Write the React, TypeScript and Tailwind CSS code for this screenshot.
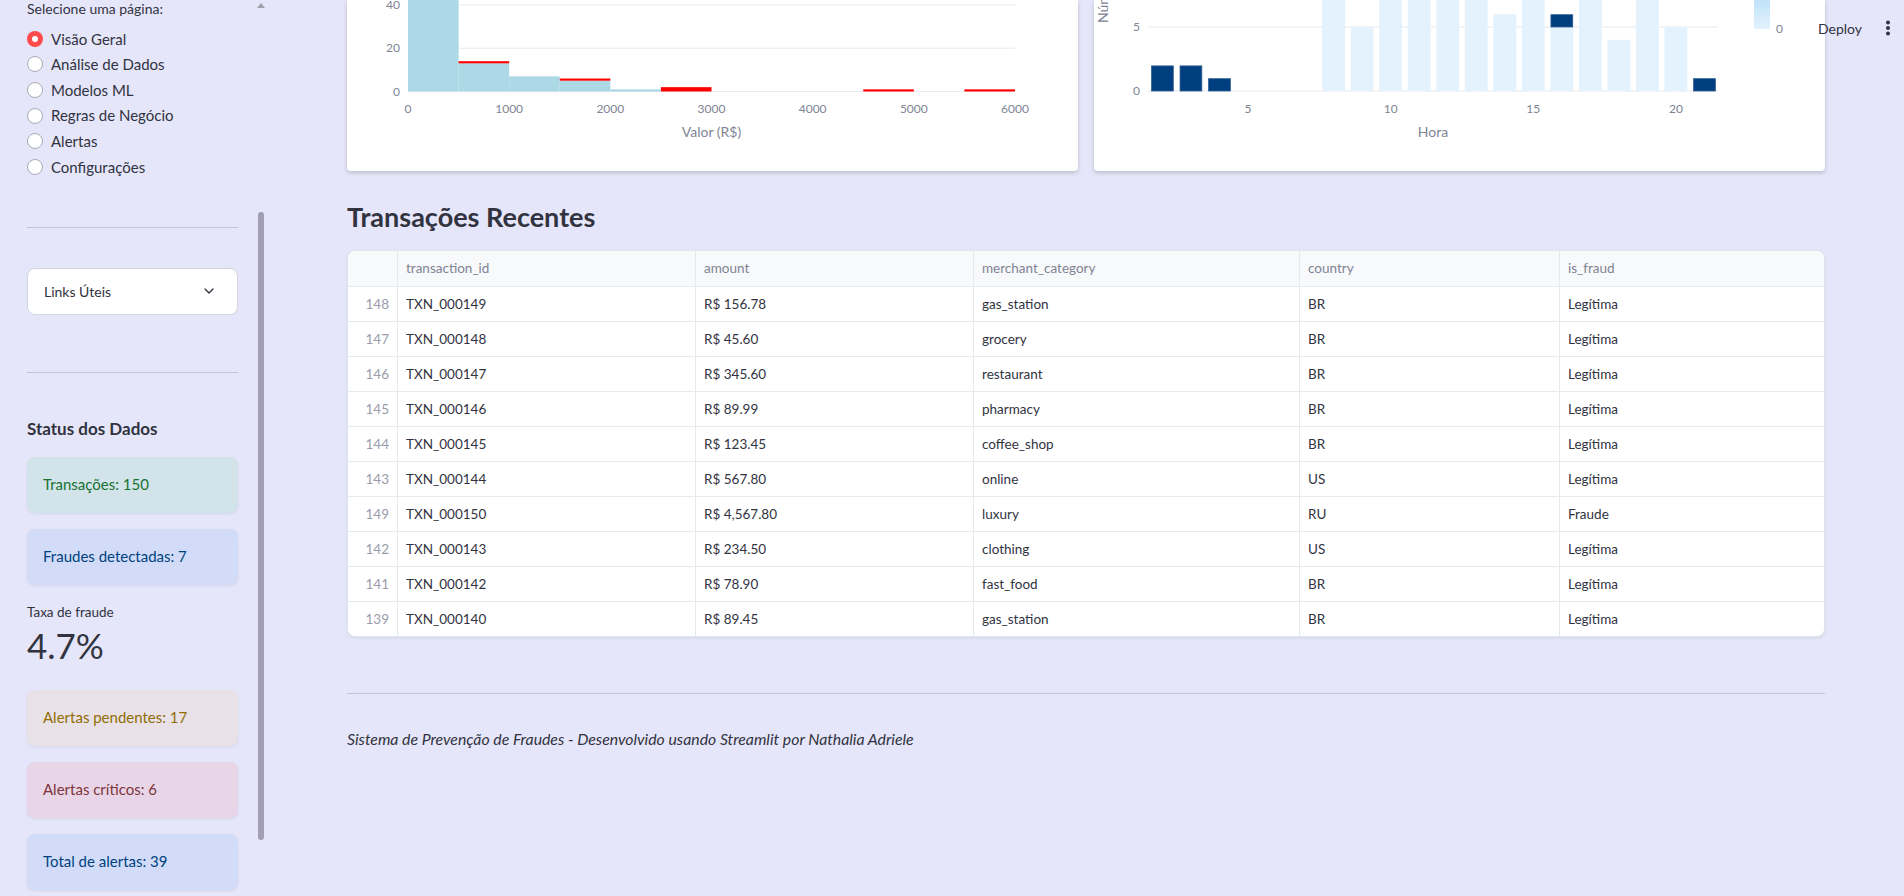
import React from "react";
import { ChevronDown } from "lucide-react";

const SVGF = "Lato, 'Liberation Sans', sans-serif";

function HistChart() {
  const W = 731, H = 171;
  const x0 = 61, x1 = 668;
  const xv = (v: number) => x0 + (v / 6000) * (x1 - x0);
  const y0 = 91.5, u = 2.165;
  const blue = [60, 13, 7, 5, 1, 0, 0, 0, 0, 0, 0, 0];
  const red = [1, 1, 0, 1, 0, 2, 0, 0, 0, 1, 0, 1];
  const bw = xv(500) - xv(0);
  return (
    <svg width={W} height={H} viewBox={`0 0 ${W} ${H}`} className="block">
      {[0, 20, 40].map((t) => (
        <line key={t} x1={x0} x2={x1} y1={y0 - t * u} y2={y0 - t * u} stroke="#e6eaf1" strokeWidth={1} />
      ))}
      {blue.map((v, i) =>
        v > 0 ? <rect key={"b" + i} x={xv(500 * i)} y={y0 - v * u} width={bw} height={v * u} fill="#add8e6" /> : null
      )}
      {red.map((r, i) =>
        r > 0 ? (
          <rect key={"r" + i} x={xv(500 * i)} y={y0 - (blue[i] + r) * u} width={bw} height={r * u} fill="#ff0000" />
        ) : null
      )}
      {[0, 20, 40].map((t) => (
        <text key={"yl" + t} x={53} y={y0 - t * u + 4} textAnchor="end" fontSize={12} fill="#808495" fontFamily={SVGF}>
          {t}
        </text>
      ))}
      {[0, 1000, 2000, 3000, 4000, 5000, 6000].map((v) => (
        <text key={"xl" + v} x={xv(v)} y={113} textAnchor="middle" fontSize={12} fill="#808495" fontFamily={SVGF}>
          {v}
        </text>
      ))}
      <text x={(x0 + x1) / 2} y={137} textAnchor="middle" fontSize={14} fill="#808495" fontFamily={SVGF}>
        Valor (R$)
      </text>
    </svg>
  );
}

function HourChart() {
  const W = 731, H = 171;
  const x0 = 54, x1 = 624;
  const hx = (h: number) => 154 + (h - 5) * 28.53;
  const y0 = 91, u = 12.8;
  const bw = 22.8;
  const legit: Record<number, number> = { 8: 10, 9: 5, 10: 9, 11: 10, 12: 11, 13: 9, 14: 6, 15: 8, 16: 5, 17: 9, 18: 4, 19: 8, 20: 5 };
  const fraud: Record<number, number> = { 2: 2, 3: 2, 4: 1, 16: 1, 21: 1 };
  const hours = Array.from({ length: 20 }, (_, i) => i + 2);
  return (
    <svg width={W} height={H} viewBox={`0 0 ${W} ${H}`} className="block">
      <defs>
        <linearGradient id="cb" x1="0" y1="1" x2="0" y2="0">
          <stop offset="0" stopColor="#e3f2fd" />
          <stop offset="1" stopColor="#a8d8f8" />
        </linearGradient>
      </defs>
      {[0, 5].map((t) => (
        <line key={t} x1={x0} x2={x1} y1={y0 - t * u} y2={y0 - t * u} stroke="#e6eaf1" strokeWidth={1} />
      ))}
      {hours.map((h) => {
        const l = legit[h] || 0;
        const f = fraud[h] || 0;
        return (
          <g key={h}>
            {l > 0 && <rect x={hx(h) - bw / 2} y={y0 - l * u} width={bw} height={l * u} fill="#e3f2fd" />}
            {f > 0 && (
              <rect
                x={hx(h) - bw / 2 + 0.5}
                y={y0 - (l + f) * u + 0.5}
                width={bw - 1}
                height={f * u - 0.5}
                fill="#003f7f"
                stroke="#2f5f92"
                strokeWidth={0.8}
              />
            )}
          </g>
        );
      })}
      {[0, 5].map((t) => (
        <text key={"yl" + t} x={46} y={y0 - t * u + 4} textAnchor="end" fontSize={12} fill="#808495" fontFamily={SVGF}>
          {t}
        </text>
      ))}
      {[5, 10, 15, 20].map((h) => (
        <text key={"xl" + h} x={hx(h)} y={113} textAnchor="middle" fontSize={12} fill="#808495" fontFamily={SVGF}>
          {h}
        </text>
      ))}
      <text x={(x0 + x1) / 2} y={137} textAnchor="middle" fontSize={14} fill="#808495" fontFamily={SVGF}>
        Hora
      </text>
      <text x={14} y={23} transform="rotate(-90 14 23)" fontSize={14} fill="#808495" fontFamily={SVGF}>
        Número de Transações
      </text>
      <rect x={660} y={-20} width={16} height={49} fill="url(#cb)" />
      <text x={682} y={33} fontSize={12} fill="#808495" fontFamily={SVGF}>
        0
      </text>
    </svg>
  );
}

const rows = [
  ["148", "TXN_000149", "R$ 156.78", "gas_station", "BR", "Legítima"],
  ["147", "TXN_000148", "R$ 45.60", "grocery", "BR", "Legítima"],
  ["146", "TXN_000147", "R$ 345.60", "restaurant", "BR", "Legítima"],
  ["145", "TXN_000146", "R$ 89.99", "pharmacy", "BR", "Legítima"],
  ["144", "TXN_000145", "R$ 123.45", "coffee_shop", "BR", "Legítima"],
  ["143", "TXN_000144", "R$ 567.80", "online", "US", "Legítima"],
  ["149", "TXN_000150", "R$ 4,567.80", "luxury", "RU", "Fraude"],
  ["142", "TXN_000143", "R$ 234.50", "clothing", "US", "Legítima"],
  ["141", "TXN_000142", "R$ 78.90", "fast_food", "BR", "Legítima"],
  ["139", "TXN_000140", "R$ 89.45", "gas_station", "BR", "Legítima"],
];

const pages = ["Visão Geral", "Análise de Dados", "Modelos ML", "Regras de Negócio", "Alertas", "Configurações"];

function Alert({ bg, fg, children }: { bg: string; fg: string; children: React.ReactNode }) {
  return (
    <div
      className={`h-[56px] rounded-lg px-4 flex items-center text-[15px] shadow-[0_1px_3px_rgba(0,0,0,0.08)] ${bg} ${fg}`}
    >
      {children}
    </div>
  );
}

export default function App() {
  return (
    <div className="relative flex w-full h-[896px] overflow-hidden bg-[#e6e6fa] font-['Lato','Liberation_Sans',sans-serif] text-[#31333f]">
      {/* Sidebar */}
      <aside className="w-[266px] shrink-0 flex">
        <div className="w-[211px] ml-[27px] flex flex-col">
          <div className="h-[18px] leading-[18px] text-[14px]">Selecione uma página:</div>
          <div className="mt-[8px] flex flex-col">
            {pages.map((p, i) => (
              <div key={p} className="h-[25.6px] flex items-center gap-2 text-[15px]">
                {i === 0 ? (
                  <span className="w-4 h-4 rounded-full bg-[#ff4b4b] flex items-center justify-center">
                    <span className="w-[6px] h-[6px] rounded-full bg-white" />
                  </span>
                ) : (
                  <span className="w-4 h-4 rounded-full bg-white border border-[#a9a9b6]" />
                )}
                <span>{p}</span>
              </div>
            ))}
          </div>
          <div className="mt-[47px] h-px bg-[#c4c4d6]" />
          <div className="mt-[40px] h-[47px] rounded-lg bg-white border border-[#d5d5df] flex items-center justify-between pl-4 pr-[20px] text-[14px]">
            <span>Links Úteis</span>
            <ChevronDown size={16} strokeWidth={2} className="text-[#31333f]" />
          </div>
          <div className="mt-[57px] h-px bg-[#c4c4d6]" />
          <div className="mt-[44px] h-[24px] leading-[24px] text-[17px] font-bold">Status dos Dados</div>
          <div className="mt-[16px] flex flex-col gap-4">
            <Alert bg="bg-[#d2e3e9]" fg="text-[#177233]">Transações: 150</Alert>
            <Alert bg="bg-[#d2dcf8]" fg="text-[#004280]">Fraudes detectadas: 7</Alert>
          </div>
          <div className="mt-[17px] h-[20px] leading-[20px] text-[13.5px]">Taxa de fraude</div>
          <div className="mt-[3px] h-[40px] leading-[40px] text-[35px]">4.7%</div>
          <div className="mt-[25px] flex flex-col gap-4">
            <Alert bg="bg-[#e8e2e8]" fg="text-[#926c05]">Alertas pendentes: 17</Alert>
            <Alert bg="bg-[#e8d5e7]" fg="text-[#7d353b]">Alertas críticos: 6</Alert>
            <Alert bg="bg-[#d2dcf8]" fg="text-[#004280]">Total de alertas: 39</Alert>
          </div>
        </div>
        <div className="ml-[19px] w-[7px] flex flex-col items-center">
          <div className="mt-[3px] w-0 h-0 border-l-[4px] border-r-[4px] border-b-[5px] border-l-transparent border-r-transparent border-b-[#a0a0ac]" />
          <div className="mt-[204px] w-[6px] h-[628px] rounded-full bg-[#a19fb1]" />
        </div>
      </aside>

      {/* Main */}
      <main className="flex-1 pl-[81px] pr-[79px] flex flex-col">
        <div className="flex gap-4 h-[171px]">
          <div className="flex-1 bg-white shadow-[0_2px_4px_rgba(0,0,0,0.18)] rounded-b-sm overflow-hidden">
            <HistChart />
          </div>
          <div className="flex-1 bg-white shadow-[0_2px_4px_rgba(0,0,0,0.18)] rounded-b-sm overflow-hidden">
            <HourChart />
          </div>
        </div>
        <h3 className="mt-[26px] h-[40px] leading-[40px] text-[27px] font-bold">Transações Recentes</h3>
        <div className="mt-[13px] rounded-lg border border-[#e4e5ec] bg-white overflow-hidden text-[13.5px] shadow-[0_1px_3px_rgba(0,0,0,0.08)]">
          <div className="grid grid-cols-[50px_298px_278px_326px_260px_1fr] h-[35px] bg-[#f8f9fb] text-[#808495]">
            <div className="border-r border-[#e8e9ef]" />
            {["transaction_id", "amount", "merchant_category", "country", "is_fraud"].map((h, i) => (
              <div key={h} className={`flex items-center px-2 ${i < 4 ? "border-r border-[#e8e9ef]" : ""}`}>
                {h}
              </div>
            ))}
          </div>
          {rows.map((r) => (
            <div key={r[1]} className="grid grid-cols-[50px_298px_278px_326px_260px_1fr] h-[35px] border-t border-[#e8e9ef]">
              <div className="flex items-center justify-end pr-2 text-[#9a9cab] border-r border-[#e8e9ef]">{r[0]}</div>
              {r.slice(1).map((c, i) => (
                <div key={i} className={`flex items-center px-2 ${i < 4 ? "border-r border-[#e8e9ef]" : ""}`}>
                  {c}
                </div>
              ))}
            </div>
          ))}
        </div>
        <div className="mt-[56px] h-px bg-[#c4c4d6]" />
        <p className="mt-[33px] leading-[24px] text-[15.8px] italic">
          Sistema de Prevenção de Fraudes - Desenvolvido usando Streamlit por Nathalia Adriele
        </p>
      </main>

      {/* Header overlay */}
      <div className="absolute top-0 right-0 h-[56px] flex items-center pr-[13px]">
        <span className="text-[14px] text-[#31333f]">Deploy</span>
        <svg width="6" height="16" viewBox="0 0 6 16" className="ml-[23px]">
          <circle cx="3" cy="2.5" r="2" fill="#31333f" />
          <circle cx="3" cy="8" r="2" fill="#31333f" />
          <circle cx="3" cy="13.5" r="2" fill="#31333f" />
        </svg>
      </div>
    </div>
  );
}
